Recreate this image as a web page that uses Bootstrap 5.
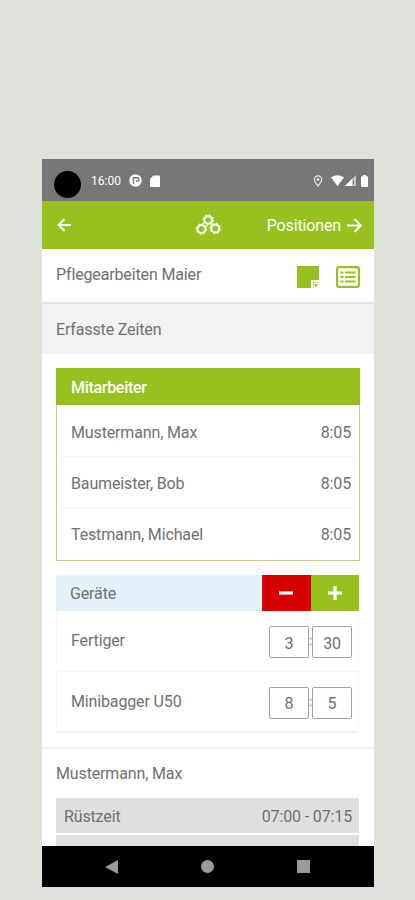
<!DOCTYPE html>
<html lang="de">
<head>
<meta charset="utf-8">
<meta name="viewport" content="width=device-width, initial-scale=1">
<title>Erfasste Zeiten</title>
<link href="https://cdn.jsdelivr.net/npm/bootstrap@5.3.0/dist/css/bootstrap.min.css" rel="stylesheet">
<style>
:root{--lime:#97c11f}
body{background:#dfe2da;font-family:Roboto,"Liberation Sans",sans-serif;font-size:16px;line-height:20px;color:#707070;letter-spacing:-.14px;overflow:hidden}
.phone{width:332px;height:728px;margin:159px 0 0 42px}
.statusbar{height:42px;background:#777;font-size:12px;letter-spacing:0;padding:1px 6px 0 12px}
.camera{width:27px;height:27px;margin-top:7px}
.clock{margin-left:10px}
.wifi{margin-left:8px}
.signal{margin-left:1px}
.battery{margin-left:5px}
.topbar{height:48px;background:var(--lime);padding:0 12px 0 15px}
.next-label{padding-top:2px}
.brand-icon{left:153px;top:13px}
.next-arrow{margin-left:6px}
.titlebar{height:55px;border-bottom:2px solid #e2e2e2;padding:0 14px 2px 14px}
.list-icon{margin-left:17px}
.section-title{height:50px;background:#f3f3f3;padding:2px 0 0 14px}
.panel{margin:14px 14px 0 14px}
.staff{border:1px solid #bfd67c;height:193px}
.staff-head{height:37px;margin:-1px -1px 0;background:var(--lime);padding:2px 0 0 15px;font-weight:500;letter-spacing:-.3px}
.staff-row{height:51px;margin:0 3px;padding:3px 5px 0 11px;border-bottom:1px solid #f4f4f4}
.staff-head+.staff-row{height:52px;padding-top:4px}
.staff-row:last-child{border:0}
.devices{margin-right:15px;height:158px;border:1px solid #f3f7f7;border-bottom:2px solid #eef2f2}
.devices-head{height:36px;margin:-1px -1px 0;background:#e3f1f8;padding:0 0 0 14px}
.devices-title{padding-top:2px}
.step{width:48.5px;border:0;padding:0}
.step-minus{background:#d40000}
.step-plus{background:var(--lime)}
.device-row{height:60px;padding:0 6px 0 14px}
.device-row+.device-row{border-top:1px solid #f4f4f4}
.num{width:40px;height:32px;border:1.5px solid #a2a2a2;border-radius:2px;padding-top:3px;margin-top:2px}
.colon{width:3px;font-size:13px}
.person{border-top:2px solid #f1f1f1;margin-top:14px;height:51px;padding:0 14px}
.entry{height:35px;background:#dfdfdf;margin:0 15px 2px 14px;padding:2px 7px 0 8px}
.navkeys{height:41px;padding-left:63px}
.navkeys svg+svg{margin-left:83px}
</style>
</head>
<body>
<main class="phone bg-white d-flex flex-column overflow-hidden">
  <div class="statusbar d-flex align-items-center text-white flex-shrink-0">
    <span class="camera bg-black rounded-circle"></span>
    <span class="clock">16:00</span>
    <svg class="ms-2" width="13" height="13" viewBox="0 0 13 13"><circle cx="6.5" cy="6.5" r="6.2" fill="#fff"/><path d="M4.500 9.800V3.700h3.700a1.700 1.700 0 0 1 0 3.400H7" fill="none" stroke="#777" stroke-width="1.500"/></svg>
    <svg class="ms-2" width="10" height="12" viewBox="0 0 10 12"><path d="M3.500.5H9a1 1 0 0 1 1 1V11a1 1 0 0 1-1 1H1a1 1 0 0 1-1-1V4z" fill="#fff"/></svg>
    <svg class="ms-auto" width="10" height="12" viewBox="0 0 10 12"><path d="M5 11C2.700 8.200 1.300 6.300 1.300 4.500a3.700 3.700 0 0 1 7.400 0C8.700 6.300 7.300 8.200 5 11z" fill="none" stroke="#e8e8e8" stroke-width="1.200"/><circle cx="5" cy="4.500" r="1.400" fill="#e8e8e8"/></svg>
    <svg class="wifi" width="13" height="11" viewBox="0 0 13 11"><path d="M0 2.500Q6.500-2 13 2.500L6.500 11z" fill="#fff"/></svg>
    <svg class="signal" width="11" height="11" viewBox="0 0 11 11"><path d="M0 11L11 0v11z" fill="#c6c6c6"/><path d="M0 11l7-7v7z" fill="#fff"/><path d="M8.500 5.500v4" stroke="#777"/></svg>
    <svg class="battery" width="7" height="12" viewBox="0 0 7 12"><path d="M2 0h3v1.200h1a1 1 0 0 1 1 1V11a1 1 0 0 1-1 1H1a1 1 0 0 1-1-1V2.200a1 1 0 0 1 1-1h1z" fill="#fff"/></svg>
  </div>
  <header class="topbar position-relative d-flex align-items-center text-white flex-shrink-0">
    <svg width="14" height="14" viewBox="0 0 14 14" fill="none" stroke="#fff" stroke-width="1.900"><path d="M14 7H1.500M7.500 1L1.500 7l6 6"/></svg>
    <svg class="brand-icon position-absolute" width="27" height="22" viewBox="0 0 27 22" fill="none" stroke="#fff"><g stroke-width="2.100"><circle cx="13.200" cy="6" r="3.800"/><circle cx="6.500" cy="15" r="4"/><circle cx="20.300" cy="14.500" r="4"/></g><g stroke-width="1" stroke-dasharray="2 2.190"><circle cx="13.200" cy="6" r="5.340"/><circle cx="6.500" cy="15" r="5.340"/><circle cx="20.300" cy="14.500" r="5.340"/></g></svg>
    <span class="ms-auto d-flex align-items-center"><span class="next-label">Positionen</span>
    <svg class="next-arrow" width="15" height="15" viewBox="0 0 15 15" fill="none" stroke="#fff" stroke-width="1.900"><path d="M0 7.500h13.500M7.500 1L14 7.500 7.500 14"/></svg></span>
  </header>
  <div class="titlebar d-flex align-items-center flex-shrink-0">
    <span class="me-auto">Pflegearbeiten Maier</span>
    <svg class="mt-1" width="22" height="22" viewBox="0 0 22 22"><path d="M0 0h22v14h-8v8H0z" fill="#97c11f"/><path d="M16 21.500V16h5.500v1h-4v4.500z" fill="#c5dc83"/><path d="M18 21.500V18h3.500z" fill="#97c11f"/></svg>
    <svg class="mt-1 list-icon" width="24" height="22" viewBox="0 0 24 22" fill="none" stroke="#97c11f"><rect x="1.100" y="1.100" width="21.800" height="19.800" rx="2" stroke-width="2.200"/><path d="M4.500 6.500h3M4.500 11h3M4.500 15.500h3M9 6.500h10.500M9 11h10.500M9 15.500h10.500" stroke-width="2.100"/></svg>
  </div>
  <div class="section-title d-flex align-items-center flex-shrink-0">Erfasste Zeiten</div>

  <section class="panel staff flex-shrink-0">
    <div class="staff-head d-flex align-items-center text-white">Mitarbeiter</div>
    <div class="staff-row d-flex align-items-center justify-content-between"><span>Mustermann, Max</span><span>8:05</span></div>
    <div class="staff-row d-flex align-items-center justify-content-between"><span>Baumeister, Bob</span><span>8:05</span></div>
    <div class="staff-row d-flex align-items-center justify-content-between"><span>Testmann, Michael</span><span>8:05</span></div>
  </section>

  <section class="panel devices flex-shrink-0">
    <div class="devices-head d-flex align-items-stretch">
      <span class="devices-title me-auto align-self-center">Geräte</span>
      <button class="step step-minus" aria-label="Minus"><svg class="d-block mx-auto" width="16" height="16" viewBox="0 0 16 16"><path d="M1 8h14" stroke="#fff" stroke-width="3.200"/></svg></button>
      <button class="step step-plus" aria-label="Plus"><svg class="d-block mx-auto" width="16" height="16" viewBox="0 0 16 16"><path d="M1 8h14M8 1v14" stroke="#fff" stroke-width="3.200"/></svg></button>
    </div>
    <div class="device-row d-flex align-items-center">
      <span class="me-auto">Fertiger</span><span class="num d-flex align-items-center justify-content-center">3</span><span class="colon">:</span><span class="num d-flex align-items-center justify-content-center">30</span>
    </div>
    <div class="device-row d-flex align-items-center">
      <span class="me-auto">Minibagger U50</span><span class="num d-flex align-items-center justify-content-center">8</span><span class="colon">:</span><span class="num d-flex align-items-center justify-content-center">5</span>
    </div>
  </section>

  <div class="person d-flex align-items-center flex-shrink-0">Mustermann, Max</div>
  <div class="flex-grow-1 overflow-hidden">
    <div class="entry d-flex align-items-center justify-content-between"><span>Rüstzeit</span><span>07:00 - 07:15</span></div>
    <div class="entry"></div>
  </div>
  <nav class="navkeys bg-black d-flex align-items-center flex-shrink-0">
    <svg width="13" height="14" viewBox="0 0 13 14"><path d="M13 0v14L0 7z" fill="#9b9b9b"/></svg>
    <svg width="13" height="13" viewBox="0 0 13 13"><circle cx="6.500" cy="6.500" r="6.500" fill="#9b9b9b"/></svg>
    <svg width="13" height="13" viewBox="0 0 13 13"><path d="M0 0h13v13H0z" fill="#9b9b9b"/></svg>
  </nav>
</main>
<script src="https://cdn.jsdelivr.net/npm/bootstrap@5.3.0/dist/js/bootstrap.bundle.min.js"></script>
</body>
</html>
